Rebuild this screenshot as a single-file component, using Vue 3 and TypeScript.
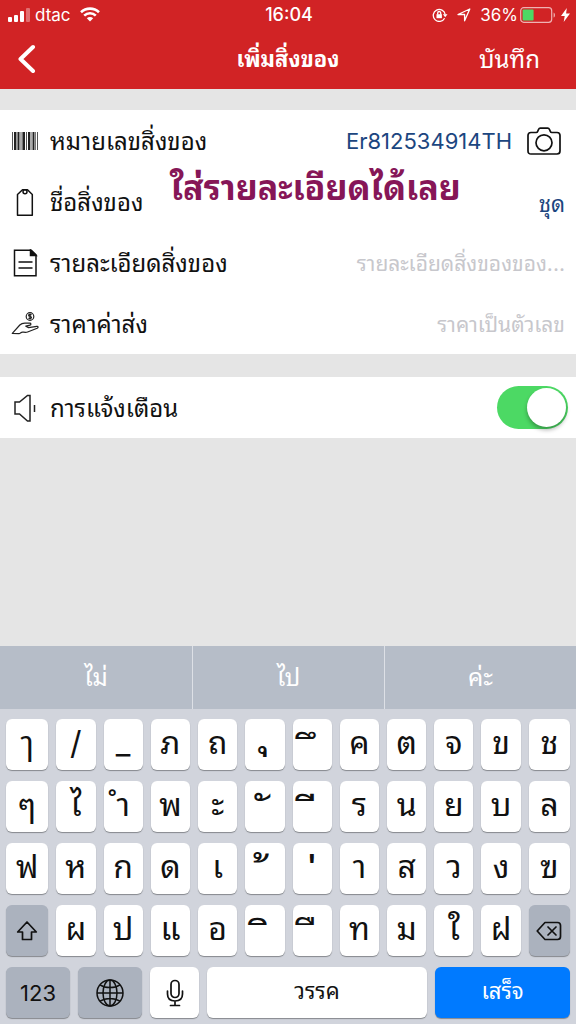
<script setup lang="ts">
import { ref } from 'vue'

const trackingNumber = ref('Er812534914TH')
const itemName = ref('ชุด')
const itemDetail = ref('')
const shippingPrice = ref('')
const notify = ref(true)

const suggestions: string[] = ['ไม่', 'ไป', 'ค่ะ']

// A no-break space carries each combining mark that has no consonant of its own.
const rows: string[][] = [
  ['ๅ', '/', '_', 'ภ', 'ถ', '\u00a0ุ', '\u00a0ึ', 'ค', 'ต', 'จ', 'ข', 'ช'],
  ['ๆ', 'ไ', 'ำ', 'พ', 'ะ', '\u00a0ั', '\u00a0ี', 'ร', 'น', 'ย', 'บ', 'ล'],
  ['ฟ', 'ห', 'ก', 'ด', 'เ', '\u00a0้', '\u00a0่', 'า', 'ส', 'ว', 'ง', 'ฃ'],
  ['shift', 'ผ', 'ป', 'แ', 'อ', '\u00a0ิ', '\u00a0ื', 'ท', 'ม', 'ใ', 'ฝ', 'delete'],
]

function markClass(key: string): string {
  if (!key.startsWith('\u00a0')) return ''
  return key.endsWith('ุ') ? 'mark-below' : 'mark-above'
}
</script>

<template>
  <div class="screen">
    <header class="top">
      <div class="status">
        <div class="status-side">
          <svg class="signal" width="22" height="14" viewBox="0 0 22 14" fill="#fff" aria-hidden="true">
            <rect x="0" y="9" width="4" height="5" rx="1" />
            <rect x="6" y="7" width="4" height="7" rx="1" />
            <rect x="12" y="3" width="4" height="11" rx="1" />
            <rect x="18" y="0" width="4" height="14" rx="1" opacity=".35" />
          </svg>
          <span>dtac</span>
          <svg class="wifi" width="20" height="15" viewBox="0 0 20 15" fill="none" stroke="#fff" stroke-width="2.6" aria-hidden="true">
            <path d="M1 5.2C6 .4 14 .4 19 5.2M4.2 8.6c3.2-3.2 8.400-3.200 11.600 0" />
            <path d="M10 14.600 6.800 11.300c1.800-1.700 4.600-1.700 6.400 0z" fill="#fff" stroke="none" />
          </svg>
        </div>
        <time class="clock">16:04</time>
        <div class="status-side end">
          <svg width="16" height="14" viewBox="0 0 16 14" fill="none" stroke="#fff" stroke-width="1.300" aria-hidden="true">
            <path d="M12.600 10.200A6 6 0 1 1 13.200 6.500" />
            <path d="M10.900 6.300h4.600l-2.300 3z" fill="#fff" stroke="none" />
            <rect x="4.500" y="6.200" width="5.400" height="4" fill="#fff" stroke="none" />
            <path d="M5.700 6.500V5a1.500 1.500 0 0 1 3 0v1.500" />
          </svg>
          <svg class="locate" width="14" height="14" viewBox="0 0 14 14" fill="none" stroke="#fff" stroke-width="1.300" stroke-linejoin="round" aria-hidden="true">
            <path d="M1 6.500 12.800 1 7.600 12.800V6.500z" />
          </svg>
          <span class="percent">36%</span>
          <svg class="battery" width="36" height="16" viewBox="0 0 36 16" fill="none" aria-hidden="true">
            <rect x=".7" y=".7" width="31" height="14.600" rx="3" stroke="#fff" stroke-opacity=".65" stroke-width="1.200" />
            <rect x="2.600" y="2.600" width="11" height="10.800" rx="1" fill="#4cd964" />
            <path d="M33.600 5.400c1.800.8 1.800 4.400 0 5.200z" fill="#fff" opacity=".65" />
          </svg>
          <svg width="9" height="14" viewBox="0 0 9 14" fill="#fff" aria-hidden="true">
            <path d="M5.800 0 0 8h3.700L2.700 14 9 5.600H5.100z" />
          </svg>
        </div>
      </div>
      <nav class="nav">
        <button class="back" type="button" aria-label="กลับ">
          <svg width="18" height="30" viewBox="0 0 18 30" fill="none" stroke="#fff" stroke-width="4" stroke-linecap="round" stroke-linejoin="round">
            <path d="M15 3 2.500 15 15 27" />
          </svg>
        </button>
        <h1>เพิ่มสิ่งของ</h1>
        <button class="save" type="button">บันทึก</button>
      </nav>
    </header>

    <main>
      <form class="group" @submit.prevent>
        <div class="row">
          <svg class="icon" width="28" height="28" viewBox="0 0 28 28" aria-hidden="true">
            <path d="M1.500 5v18M10 5v18M15.500 5v18M20 5v18M26.500 5v18" stroke="#555" stroke-width="1" />
            <path d="M4 5v18M7.500 5v18M13 5v18M18 5v18M22.500 5v18" stroke="#222" stroke-width="2" />
            <path d="M5.800 5v18M11.500 5v18M24.500 5v18" stroke="#777" stroke-width="1" />
          </svg>
          <label for="tracking">หมายเลขสิ่งของ</label>
          <input id="tracking" v-model="trackingNumber" class="latin" type="text" />
          <button class="camera" type="button" aria-label="สแกนบาร์โค้ด">
            <svg width="34" height="28" viewBox="0 0 34 28" fill="none" stroke="#111" stroke-width="1.700" stroke-linejoin="round">
              <path d="M4 5.500h5.200c1 0 1.200-.4 1.600-1.400l.7-1.600c.4-.9.800-1.300 1.800-1.300h7.400c1 0 1.400.4 1.800 1.300l.7 1.600c.4 1 .6 1.400 1.600 1.400H30c2 0 3 1 3 3V24c0 2-1 3-3 3H4c-2 0-3-1-3-3V8.500c0-2 1-3 3-3z" />
              <circle cx="17" cy="15.800" r="8" />
            </svg>
          </button>
        </div>
        <div class="row">
          <svg class="icon" width="28" height="28" viewBox="0 0 28 28" fill="none" stroke="#111" stroke-width="1.500" stroke-linejoin="round" aria-hidden="true">
            <path d="M6.500 27.200V6.500L11.500 1.800h5L21.300 6.500v20.700z" />
            <circle cx="14" cy="3.800" r="2" />
          </svg>
          <label for="name">ชื่อสิ่งของ</label>
          <input id="name" v-model="itemName" type="text" />
        </div>
        <div class="row">
          <svg class="icon" width="28" height="28" viewBox="0 0 28 28" fill="none" stroke="#111" stroke-width="1.500" aria-hidden="true">
            <path d="M3.500 1.200h16.800l4.700 4.700v20.900H3.500z" />
            <path d="M19.500 1.200V6.500H25z" fill="#111" />
            <path d="M7.500 13h14M7.500 19h14" />
          </svg>
          <label for="detail">รายละเอียดสิ่งของ</label>
          <input id="detail" v-model="itemDetail" type="text" placeholder="รายละเอียดสิ่งของของ..." />
        </div>
        <div class="row">
          <svg class="icon" width="28" height="28" viewBox="0 0 28 28" fill="none" stroke="#222" stroke-width="1.200" stroke-linejoin="round" aria-hidden="true">
            <circle cx="19" cy="6.500" r="3.800" />
            <path d="M20.500 5c-1-1-3-.7-2.900.4.100 1.200 2.900.9 2.900 2.200 0 1.200-2 1.300-3 .4M19 3.600v5.800" />
            <path d="M1.300 23.400 8.800 15c1.500-1.500 3-1.900 5-1.900h5c1.400 0 1.500 1.800.2 2.100l-4.200.9 2.800 1.500 8.200-1.300c1.600-.2 1.700 1.400.4 2l-9.600 3.700c-1.600.6-3 .3-4.700.1-2-.2-2.600 1.500-3.800 1.500z" />
          </svg>
          <label for="price">ราคาค่าส่ง</label>
          <input id="price" v-model="shippingPrice" type="text" placeholder="ราคาเป็นตัวเลข" />
        </div>
        <p class="callout">ใส่รายละเอียดได้เลย</p>
      </form>

      <div class="group">
        <div class="row">
          <svg class="icon" width="28" height="28" viewBox="0 0 28 28" fill="none" stroke="#222" stroke-width="1.500" aria-hidden="true">
            <path d="M4 8h4.500l8-6.500h2.500v25.500h-2.500l-8-7H4zM23.500 11v7" />
          </svg>
          <label for="notify">การแจ้งเตือน</label>
          <input id="notify" v-model="notify" class="switch" type="checkbox" role="switch" />
        </div>
      </div>
    </main>

    <section class="keyboard" aria-label="แป้นพิมพ์">
      <div class="suggestions">
        <button v-for="word in suggestions" :key="word" type="button">{{ word }}</button>
      </div>
      <div class="keys">
        <div v-for="(row, i) in rows" :key="i" class="key-row">
          <template v-for="key in row" :key="key">
            <button v-if="key === 'shift'" class="key dark icon-key" type="button" aria-label="Shift">
              <svg width="22" height="22" viewBox="0 0 22 22" fill="none" stroke="#111" stroke-width="1.700" stroke-linejoin="round">
                <path d="M11 2 20.300 12H15.500v7.500h-9V12H1.700z" />
              </svg>
            </button>
            <button v-else-if="key === 'delete'" class="key dark icon-key" type="button" aria-label="ลบ">
              <svg width="26" height="20" viewBox="0 0 26 20" fill="none" stroke="#111" stroke-width="1.700" stroke-linejoin="round" stroke-linecap="round">
                <path d="M9 1.500h12.500c2 0 3 1 3 3v11c0 2-1 3-3 3H9L1.200 10z" />
                <path d="m12 6 8 8m0-8-8 8" />
              </svg>
            </button>
            <button v-else class="key" :class="markClass(key)" type="button">{{ key }}</button>
          </template>
        </div>
        <div class="bottom-row">
          <button class="key dark word latin icon-key" type="button">123</button>
          <button class="key dark icon-key" type="button" aria-label="เปลี่ยนภาษา">
            <svg width="30" height="30" viewBox="0 0 30 30" fill="none" stroke="#111" stroke-width="1.500">
              <circle cx="15" cy="15" r="13" />
              <ellipse cx="15" cy="15" rx="7" ry="13" />
              <path d="M15 2v26M2 15h26M5 6.800c5.500 3.700 14.500 3.700 20 0M5 23.200c5.500-3.700 14.500-3.700 20 0" />
            </svg>
          </button>
          <button class="key icon-key" type="button" aria-label="ป้อนตามคำบอก">
            <svg width="18" height="28" viewBox="0 0 18 28" fill="none" stroke="#111" stroke-width="1.700" stroke-linecap="round">
              <rect x="5" y="1.500" width="8" height="17" rx="4" />
              <path d="M1.500 12v3c0 4.500 3 7 7.500 7s7.500-2.500 7.500-7v-3M9 22v4.500M4.500 26.500h9" />
            </svg>
          </button>
          <button class="key word" type="button">วรรค</button>
          <button class="key word done" type="button">เสร็จ</button>
        </div>
      </div>
    </section>
  </div>
</template>

<style>
body {
  margin: 0;
  background: #e5e5e5;
}
</style>

<style scoped>
.screen {
  display: flex;
  flex-direction: column;
  min-height: 100vh;
  background: #e5e5e5;
  color: #111;
  font-family: Inter, "Noto Sans Thai Looped", "Noto Sans Thai", Loma, sans-serif;
}

button,
input {
  box-sizing: border-box;
  margin: 0;
  padding: 0;
  border: 0;
  background: none;
  color: inherit;
  font: inherit;
}

svg {
  display: block;
  flex: none;
}

.top {
  background: #d12325;
  color: #fff;
}

.status {
  display: grid;
  grid-template-columns: 1fr auto 1fr;
  align-items: center;
  height: 29px;
  padding: 0 6px 0 8px;
  font-size: 17px;
}

.status-side {
  display: flex;
  align-items: center;
  gap: 5px;
}

.wifi {
  margin-left: 4px;
}

.end {
  justify-content: flex-end;
}

.locate {
  margin: 0 4px;
}

.percent {
  margin-right: -3px;
}

.clock {
  font-size: 18px;
  font-weight: 500;
}

.nav {
  display: grid;
  grid-template-columns: 1fr auto 1fr;
  align-items: center;
  height: 60px;
  padding: 0 18px;
}

.back {
  justify-self: start;
}

h1 {
  margin: 0;
  padding-bottom: 4px;
  font-size: 22px;
  font-weight: 700;
}

.save {
  justify-self: end;
  margin-right: 18px;
  padding-bottom: 4px;
  font-size: 24px;
}

main {
  display: grid;
  gap: 23px;
  padding: 21px 0;
}

.group {
  position: relative;
  background: #fff;
}

.row {
  display: flex;
  align-items: center;
  height: 61px;
  padding: 0 11px;
}

.icon {
  margin-right: 11px;
}

label {
  flex: none;
  padding-bottom: 4px;
  font-size: 24px;
}

.row input {
  flex: 1;
  min-width: 0;
  height: 48px;
  text-align: right;
  font-size: 22px;
  color: #1c4680;
}

.row input::placeholder {
  color: #c7c7cc;
  font-size: 21px;
  opacity: 1;
}

.camera {
  margin: 0 4px 0 15px;
}

.callout {
  position: absolute;
  top: 52px;
  left: 170px;
  margin: 0;
  font-size: 34px;
  font-weight: 700;
  line-height: 52px;
  color: #861657;
  white-space: nowrap;
  pointer-events: none;
}

.row .switch {
  flex: none;
  appearance: none;
  width: 71px;
  height: 43px;
  margin-left: auto;
  margin-right: -3px;
  border-radius: 22px;
  background: #4cd964;
}

.switch::before {
  content: "";
  display: block;
  width: 39px;
  height: 39px;
  margin: 2px;
  border-radius: 50%;
  background: #fff;
  box-shadow: 0 3px 4px rgba(0, 0, 0, 0.3);
}

.switch:checked::before {
  margin-left: 30px;
}

.row .switch:not(:checked) {
  background: #d8d8d8;
}

.keyboard {
  margin-top: auto;
  background: #d1d4dc;
}

.suggestions {
  display: grid;
  grid-template-columns: repeat(3, 1fr);
  height: 63px;
  background: #b6bdc8;
  color: #fff;
  font-size: 24px;
}

.suggestions button {
  padding-bottom: 6px;
}

.suggestions button + button {
  border-left: 1px solid #dde0e6;
}

.keys {
  display: grid;
  gap: 11px;
  padding: 10px 6px 6px;
}

.key-row {
  display: grid;
  grid-template-columns: 42fr repeat(10, 39fr) 41fr;
  gap: 8px;
}

.bottom-row {
  display: grid;
  grid-template-columns: 64fr 64fr 49fr 220fr 135fr;
  gap: 8px;
}

.key {
  display: flex;
  align-items: center;
  justify-content: center;
  min-width: 0;
  height: 51px;
  padding-bottom: 4px;
  border-radius: 6px;
  background: #fff;
  box-shadow: 0 1px 1px #85888d;
  font-size: 32px;
  line-height: 44px;
}

.icon-key {
  padding-bottom: 0;
}

.mark-above {
  padding: 12px 0 0;
  font-size: 42px;
}

.mark-below {
  padding-bottom: 32px;
  font-size: 42px;
}

.dark {
  background: #abb2be;
}

.word {
  font-size: 22px;
}

.done {
  background: #007aff;
  color: #fff;
}

.latin {
  font-family: Inter, "Liberation Sans", sans-serif;
}
</style>
